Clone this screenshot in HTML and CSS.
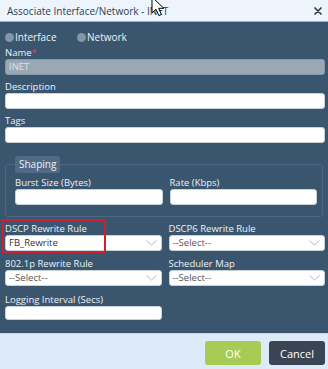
FILE: index.html
```html
<!DOCTYPE html>
<html>
<head>
<meta charset="utf-8">
<link rel="stylesheet" href="styles.css">
</head>
<body>
<div class="dialog">
  <div class="header">
    <span class="title">Associate Interface/Network - INET</span>
    <svg class="close" width="8" height="8" viewBox="0 0 8 8"><path d="M1 1L7 7M7 1L1 7" stroke="#2c3e50" stroke-width="1.7" stroke-linecap="round"/></svg>
    <svg class="cursor" width="14" height="22" viewBox="0 0 14 22"><path d="M1 1V17L5 13.2L7.8 19.6L10.4 18.5L7.7 12.3H12.8Z" fill="#fff" stroke="#000" stroke-width="1" stroke-linejoin="round"/></svg>
  </div>
  <div class="body">
    <div class="radios">
      <span class="radio"><span class="dot"></span>Interface</span>
      <span class="radio"><span class="dot"></span>Network</span>
    </div>
    <div class="label">Name<span class="req">*</span></div>
    <div class="input disabled">INET</div>
    <div class="label gap">Description</div>
    <div class="input"></div>
    <div class="label gap">Tags</div>
    <div class="input tall"></div>

    <fieldset class="shaping">
      <legend>Shaping</legend>
      <div class="grid">
        <div>
          <div class="label">Burst Size (Bytes)</div>
          <div class="input tall"></div>
        </div>
        <div>
          <div class="label">Rate (Kbps)</div>
          <div class="input tall"></div>
        </div>
      </div>
    </fieldset>

    <div class="grid outer">
      <div class="cell">
        <div class="label">DSCP Rewrite Rule</div>
        <div class="select dark">FB_Rewrite<svg class="chev" width="11" height="6" viewBox="0 0 11 6"><path d="M0.5 0.5L5.5 5L10.5 0.5" fill="none" stroke="#b3bac2" stroke-width="1"/></svg></div>
        <div class="highlight"></div>
      </div>
      <div class="cell">
        <div class="label">DSCP6 Rewrite Rule</div>
        <div class="select">--Select--<svg class="chev" width="11" height="6" viewBox="0 0 11 6"><path d="M0.5 0.5L5.5 5L10.5 0.5" fill="none" stroke="#b3bac2" stroke-width="1"/></svg></div>
      </div>
      <div class="cell">
        <div class="label">802.1p Rewrite Rule</div>
        <div class="select">--Select--<svg class="chev" width="11" height="6" viewBox="0 0 11 6"><path d="M0.5 0.5L5.5 5L10.5 0.5" fill="none" stroke="#b3bac2" stroke-width="1"/></svg></div>
      </div>
      <div class="cell">
        <div class="label">Scheduler Map</div>
        <div class="select">--Select--<svg class="chev" width="11" height="6" viewBox="0 0 11 6"><path d="M0.5 0.5L5.5 5L10.5 0.5" fill="none" stroke="#b3bac2" stroke-width="1"/></svg></div>
      </div>
      <div class="cell">
        <div class="label">Logging Interval (Secs)</div>
        <div class="input short"></div>
      </div>
    </div>
  </div>
  <div class="footer">
    <button class="btn ok">OK</button>
    <button class="btn cancel">Cancel</button>
  </div>
</div>
</body>
</html>
```
FILE: styles.css
```css
* { box-sizing: border-box; }
html, body { margin: 0; padding: 0; }
body {
  font-family: "Open Sans", "DejaVu Sans", sans-serif;
  width: 328px;
  height: 369px;
  overflow: hidden;
}
.dialog {
  width: 328px;
  height: 369px;
  display: flex;
  flex-direction: column;
}
.header {
  position: relative;
  height: 22px;
  background: #eef4fb;
  border-bottom: 1px solid #9fb0c0;
  display: flex;
  align-items: center;
  padding: 0 6px 0 7px;
  flex: none;
}
.title {
  font-size: 10px;
  color: #2b3f55;
  flex: 1;
  white-space: nowrap;
}
.close { flex: none; margin-top: 1px; }
.cursor {
  position: absolute;
  left: 151px;
  top: -4px;
}
.body {
  background: #3a566f;
  height: 311px;
  padding: 8px 3px 0 5px;
  flex: none;
  color: #eef2f6;
  font-size: 9.5px;
}
.radios {
  display: flex;
  height: 14px;
  align-items: center;
  margin-bottom: 2px;
  font-size: 10px;
}
.radio {
  display: flex;
  align-items: center;
  width: 72px;
}
.dot {
  width: 9px;
  height: 9px;
  border-radius: 50%;
  background: #8696a6;
  margin-right: 1px;
}
.label {
  height: 13px;
  line-height: 13px;
  font-size: 9.5px;
  white-space: nowrap;
}
.label.gap { margin-top: 5px; }
.req { color: #e0395a; }
.input {
  height: 16px;
  background: #fff;
  border: 1px solid #c9d1d9;
  border-radius: 3px;
}
.input.tall { height: 16px; }
.input.short { height: 14px; }
.input.disabled {
  height: 16px;
  background: #9aa8b5;
  border-color: #8897a5;
  color: #dde3e8;
  font-size: 9.5px;
  line-height: 14px;
  padding-left: 3px;
}
.shaping {
  margin: 13px 2px 0 0;
  border: 1px solid #4c6781;
  border-radius: 3px;
  padding: 3px 5px 11px 9px;
  min-width: 0;
}
.shaping legend {
  background: #4f6b85;
  border-radius: 3px;
  padding: 0 4px;
  height: 17px;
  line-height: 17px;
  font-size: 10px;
  color: #eef2f6;
  margin: 0;
}
.grid {
  display: grid;
  grid-template-columns: 1fr 1fr;
  column-gap: 7px;
}
.outer {
  margin-top: 5px;
  row-gap: 6px;
}
.cell { position: relative; }
.cell:nth-child(5) { margin-top: 1px; }
.select {
  position: relative;
  height: 16px;
  background: #fff;
  border: 1px solid #c9d1d9;
  border-radius: 3px;
  color: #555;
  font-size: 9.5px;
  line-height: 14px;
  padding-left: 3px;
  display: flex;
  align-items: center;
  justify-content: space-between;
  padding-right: 4px;
}
.select.dark { color: #333; }
.chev { flex: none; }
.highlight {
  position: absolute;
  left: -3px;
  top: -3px;
  width: 104px;
  height: 34px;
  border: 2px solid #d0202f;
}
.footer {
  flex: 1;
  background: #dcebf7;
  border-top: 1px solid #c7d9e8;
  display: flex;
  justify-content: flex-end;
  align-items: flex-start;
  padding: 7px 3px 0 0;
  gap: 8px;
}
.btn {
  width: 56px;
  height: 24px;
  border: none;
  border-radius: 3px;
  font-family: "Open Sans", sans-serif;
  font-size: 11px;
  color: #fff;
  padding: 0;
}
.ok { background: #a6cc56; }
.cancel { background: #3b4452; }
```
